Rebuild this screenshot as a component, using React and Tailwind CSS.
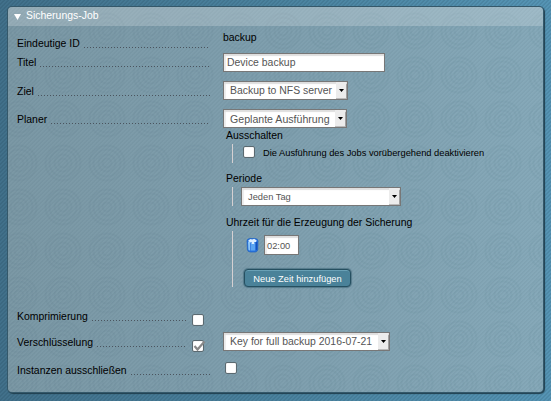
function Select({ children, className }) {
  return (
    <div className={`flex h-[19px] items-center border border-[#777] bg-white text-[#555] shadow-[inset_0_2px_1px_#dedede,inset_2px_0_1px_#ededed,inset_-1px_0_0_#999] ${className}`}>
      <span className="min-w-0 flex-1 whitespace-nowrap">{children}</span>
      <span className="mr-px flex h-[17px] w-[10px] items-center justify-center border-b border-[#bbb] bg-[#ececec]">
        <svg width="5" height="3" viewBox="0 0 5 3">
          <path d="M0 0h5L2.5 3z" fill="#000" />
        </svg>
      </span>
    </div>
  );
}

function Checkbox({ checked, className = "" }) {
  return (
    <span className={`block h-[12px] w-[12px] shrink-0 rounded-[2px] border border-[#5a6970] bg-white shadow-[inset_0_0_1px_#aaa] ${className}`}>
      {checked && (
        <svg width="13" height="12" viewBox="0 0 13 12" className="overflow-visible">
          <path d="M1.5 5 4.5 8.5 11.5 .5" fill="none" stroke="#888" strokeWidth="2.2" />
        </svg>
      )}
    </span>
  );
}

function Label({ children, className = "w-[193px]", lead = "ml-[4px]" }) {
  return (
    <div className={`flex h-[14px] shrink-0 whitespace-nowrap ${className}`}>
      <span>{children}</span>
      <span className={`mt-[10px] h-px flex-1 bg-[repeating-linear-gradient(90deg,#4b555f_0_1px,transparent_1px_3px)] ${lead}`} />
    </div>
  );
}

function Group({ title, className, children }) {
  return (
    <div className="ml-[3px]">
      <div className="h-[14px] whitespace-nowrap">{title}</div>
      <div className={`ml-[6px] border-l border-[#d5d0d2] ${className}`}>{children}</div>
    </div>
  );
}

function TrashIcon() {
  return (
    <svg width="13" height="16" viewBox="0 0 13 16" className="shrink-0">
      <path d="M1 4Q1 1.8 4 1.5h5Q12 1.8 12 4l-.3 9Q11 15 9 15H4.500Q2 15 1.500 13z" fill="#2a74dd" stroke="#1d62c4" strokeWidth=".7" />
      <path d="M2 4.500h2.200v9Q2.600 13.500 2.400 12.500z" fill="#8cc6f8" />
      <path d="M5 5.500h4.200v8H5z" fill="#5ba5f2" />
      <path d="M9.800 5h1.500v7.500l-1.500 1z" fill="#1450bd" />
      <path d="M2.200 3.500 4.500 2l1.700.6L8.200 1.800l2.500 1.600-.7 1.700-1.800-.2v2.200H5.700V5L4 5.600z" fill="#dceeff" />
    </svg>
  );
}

export default function App() {
  return (
    <div className="h-[401px] w-[551px] overflow-hidden bg-[repeating-linear-gradient(135deg,rgba(0,25,40,0.09)_0_1px,transparent_1px_2.828px),linear-gradient(90deg,#41708a_0%,#4a829e_50%,#5594b4_100%)] pt-[7px] pl-[8px] font-['Liberation_Sans',Arial,sans-serif] text-[10.45px] leading-[14px] text-black">
      <div className="h-[385px] w-[535px] overflow-hidden rounded-[4px] bg-[repeating-linear-gradient(135deg,rgba(30,60,75,0.05)_0_1px,transparent_1px_2.828px),radial-gradient(circle_at_center,transparent_3px,rgba(40,80,95,0.045)_4px_5px,transparent_6px_7px,rgba(40,80,95,0.045)_8px_9px,transparent_10px_12px,rgba(40,80,95,0.045)_13px_14px,transparent_15px_16px,rgba(40,80,95,0.045)_17px_18px,transparent_19px),linear-gradient(90deg,#7b98a5_0%,#7f9fae_50%,#86a9b9_100%)] bg-[size:auto,44px_44px,auto] bg-[position:0_0,33px_2px,0_0] shadow-[0_0_0_1px_#34586a,1px_1px_1px_1px_#203f4e]">
        <div className="flex h-[19px] items-center bg-white/20 pl-[6px] text-white">
          <svg width="7" height="6" viewBox="0 0 7 6" className="mt-px">
            <path d="M0 0h7L3.5 6z" fill="#fff" />
          </svg>
          <span className="-mt-px ml-[5px]">Sicherungs-Job</span>
        </div>

        <div className="pl-[9px]">
          <div className="flex h-[27px] gap-[13px] pt-[5px]">
            <Label className="mt-[6px] w-[193px]">Eindeutige ID</Label>
            <span>backup</span>
          </div>

          <div className="flex h-[28px] gap-[13px]">
            <Label className="mt-[3px] w-[193px]">Titel</Label>
            <div className="h-[19px] w-[162px] border border-[#777] bg-white pt-[2px] pl-[3px] text-[#555] shadow-[inset_0_2px_1px_#dedede,inset_2px_0_1px_#ededed]">Device backup</div>
          </div>

          <div className="flex h-[28px] gap-[13px]">
            <Label className="mt-[4px] w-[193px]">Ziel</Label>
            <Select className="w-[125px] pl-[6px]">Backup to NFS server</Select>
          </div>

          <div className="flex h-[202px] gap-[13px]">
            <Label className="mt-[4px] w-[193px]">Planer</Label>
            <div>
              <Select className="w-[124px] pl-[6px] text-[10.6px]">Geplante Ausführung</Select>
              <div className="mt-px flex flex-col">
                <Group title="Ausschalten" className="mt-px flex h-[19px] items-center pl-[10px] text-[9.3px]">
                  <Checkbox className="-mt-[3px]" />
                  <span className="-mt-px ml-[8px] whitespace-nowrap">Die Ausführung des Jobs vorübergehend deaktivieren</span>
                </Group>
                <div className="mt-[9px]">
                  <Group title="Periode" className="mt-px h-[19px] pl-[8px] text-[9.3px]">
                    <Select className="w-[160px] pl-[6px]">Jeden Tag</Select>
                  </Group>
                </div>
                <div className="mt-[10px]">
                  <Group title="Uhrzeit für die Erzeugung der Sicherung" className="mt-px h-[56px] pt-[4px] pl-[11px] text-[9.3px]">
                    <div className="flex items-center gap-[5px] pl-[2px]">
                      <TrashIcon />
                      <div className="h-[20px] w-[35px] border border-[#777] bg-white pt-[3px] pl-[2px] text-[#555] shadow-[inset_0_2px_1px_#dedede,inset_2px_0_1px_#ededed]">02:00</div>
                    </div>
                    <div className="mt-[14px] h-[18px] w-[107px] rounded-[4px] border border-[#254f60] bg-[#4a8299] pt-[2px] text-center whitespace-nowrap text-white shadow-[0_0_1px_1px_#54798a,inset_0_1px_#69a0b5]">Neue Zeit hinzufügen</div>
                  </Group>
                </div>
              </div>
            </div>
          </div>

          <div className="flex h-[21px] gap-[5px]">
            <Label className="-mt-px w-[170px]">Komprimierung</Label>
            <Checkbox className="mt-[3px]" />
          </div>

          <div className="flex h-[28px]">
            <Label className="mt-[4px] w-[170px]">Verschlüsselung</Label>
            <Checkbox checked className="mt-[8px] ml-[5px]" />
            <Select className="ml-[19px] w-[167px] pl-[6px]">Key for full backup 2016-07-21</Select>
          </div>

          <div className="flex pt-px">
            <Label className="mt-[3px] w-[193px]">Instanzen ausschließen</Label>
            <Checkbox className="mt-px ml-[15px]" />
          </div>
        </div>
      </div>
    </div>
  );
}
